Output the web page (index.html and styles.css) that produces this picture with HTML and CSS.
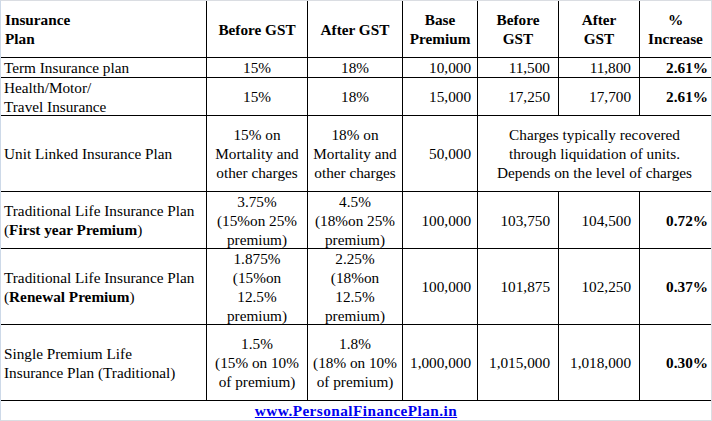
FILE: index.html
```html
<!DOCTYPE html>
<html>
<head>
<meta charset="utf-8">
<link rel="stylesheet" href="styles.css">
</head>
<body>
<div class="frame">
  <div class="grid">
    <div class="c hd left"><div>Insurance<br>Plan</div></div>
    <div class="c hd"><div>Before GST</div></div>
    <div class="c hd"><div>After GST</div></div>
    <div class="c hd"><div>Base<br>Premium</div></div>
    <div class="c hd"><div>Before<br>GST</div></div>
    <div class="c hd"><div>After<br>GST</div></div>
    <div class="c hd"><div>%<br>Increase</div></div>

    <div class="c left"><div>Term Insurance plan</div></div>
    <div class="c mid"><div>15%</div></div>
    <div class="c mid"><div>18%</div></div>
    <div class="c num4"><div>10,000</div></div>
    <div class="c num"><div>11,500</div></div>
    <div class="c num"><div>11,800</div></div>
    <div class="c pct"><div>2.61%</div></div>

    <div class="c left"><div>Health/Motor/<br>Travel Insurance</div></div>
    <div class="c mid"><div>15%</div></div>
    <div class="c mid"><div>18%</div></div>
    <div class="c num4"><div>15,000</div></div>
    <div class="c num"><div>17,250</div></div>
    <div class="c num"><div>17,700</div></div>
    <div class="c pct"><div>2.61%</div></div>

    <div class="c left"><div>Unit Linked Insurance Plan</div></div>
    <div class="c mid"><div>15% on<br>Mortality and<br>other charges</div></div>
    <div class="c mid"><div>18% on<br>Mortality and<br>other charges</div></div>
    <div class="c num4"><div>50,000</div></div>
    <div class="c mid span3"><div>Charges typically recovered<br>through liquidation of units.<br>Depends on the level of charges</div></div>

    <div class="c left"><div>Traditional Life Insurance Plan<br>(<b>First year Premium</b>)</div></div>
    <div class="c mid"><div>3.75%<br>(15%on 25%<br>premium)</div></div>
    <div class="c mid"><div>4.5%<br>(18%on 25%<br>premium)</div></div>
    <div class="c num4"><div>100,000</div></div>
    <div class="c num"><div>103,750</div></div>
    <div class="c num"><div>104,500</div></div>
    <div class="c pct"><div>0.72%</div></div>

    <div class="c left"><div>Traditional Life Insurance Plan<br>(<b>Renewal Premium</b>)</div></div>
    <div class="c mid"><div>1.875%<br>(15%on<br>12.5%<br>premium)</div></div>
    <div class="c mid"><div>2.25%<br>(18%on<br>12.5%<br>premium)</div></div>
    <div class="c num4"><div>100,000</div></div>
    <div class="c num"><div>101,875</div></div>
    <div class="c num"><div>102,250</div></div>
    <div class="c pct"><div>0.37%</div></div>

    <div class="c left"><div>Single Premium Life<br>Insurance Plan (Traditional)</div></div>
    <div class="c mid"><div>1.5%<br>(15% on 10%<br>of premium)</div></div>
    <div class="c mid"><div>1.8%<br>(18% on 10%<br>of premium)</div></div>
    <div class="c num4"><div>1,000,000</div></div>
    <div class="c num"><div>1,015,000</div></div>
    <div class="c num"><div>1,018,000</div></div>
    <div class="c pct"><div>0.30%</div></div>

    <div class="c mid foot"><div><a class="link" href="#">www.PersonalFinancePlan.in</a></div></div>
  </div>
</div>
</body>
</html>
```

FILE: styles.css
```css
html, body {
  margin: 0;
  padding: 0;
  background: #ffffff;
}
body {
  font-family: "Liberation Serif", "Times New Roman", serif;
  font-size: 15.25px;
  line-height: 19px;
  color: #000000;
}
.frame {
  width: 712px;
  height: 421px;
  box-sizing: border-box;
  border: 1px solid #dadde2;
  border-left-color: #cdd9e8;
  background: #ffffff;
}
.grid {
  display: grid;
  grid-template-columns: 205px 100px 94px 74px 80px 80px 71px;
  grid-template-rows: 56px 19px 37px 75px 56px 75px 75px 19px;
  gap: 1px;
  background: #000000;
  width: 710px;
  height: 419px;
}
.c {
  background: #ffffff;
  display: flex;
  flex-direction: column;
  justify-content: center;
  white-space: nowrap;
}
.hd {
  font-weight: bold;
  text-align: center;
}
.left {
  text-align: left;
  padding-left: 3px;
}
.hd.left {
  padding-left: 4px;
}
.mid {
  text-align: center;
}
.num4 {
  text-align: right;
  padding-right: 6px;
}
.num {
  text-align: right;
  padding-right: 8px;
}
.pct {
  text-align: right;
  padding-right: 3px;
  font-weight: bold;
}
.span3 {
  grid-column: span 3;
}
.foot {
  grid-column: 1 / -1;
}
.link {
  color: #0000ee;
  font-weight: bold;
  text-decoration: underline;
  letter-spacing: 0.45px;
}
```
